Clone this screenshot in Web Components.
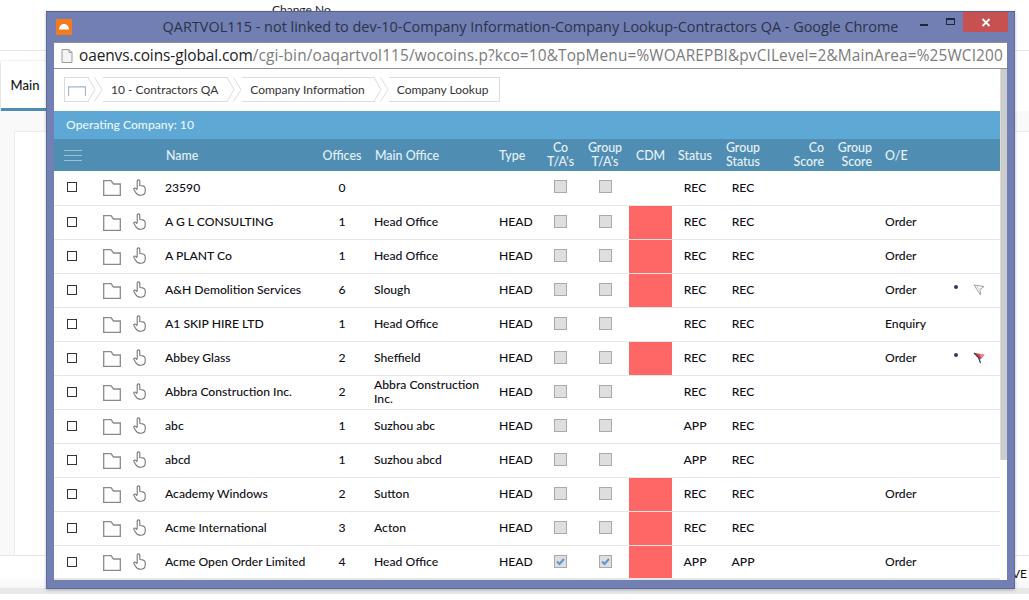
<!DOCTYPE html>
<html lang="en">
<head>
<meta charset="utf-8">
<title>Company Lookup</title>
<style>
  html, body { margin: 0; padding: 0; height: 100%; overflow: hidden; background: #fff; }
  body { font-family: Lato, "Liberation Sans", sans-serif; }
</style>
</head>
<body>
<back-page>
  <popup-window
    heading="QARTVOL115 - not linked to dev-10-Company Information-Company Lookup-Contractors QA - Google Chrome"
    host-part="oaenvs.coins-global.com"
    path-part="/cgi-bin/oaqartvol115/wocoins.p?kco=10&amp;TopMenu=%WOAREPBI&amp;pvCILevel=2&amp;MainArea=%25WCI200">
    <crumb-bar>
      <crumb-item home></crumb-item>
      <crumb-item>10 - Contractors QA</crumb-item>
      <crumb-item>Company Information</crumb-item>
      <crumb-item last>Company Lookup</crumb-item>
    </crumb-bar>
    <lookup-table company="Operating Company: 10"></lookup-table>
  </popup-window>
</back-page>

<script>
// shared column widths for header and rows
const COLUMNS = '36px 43px 32px 155px 44px 135px 41px 41px 48px 43px 46px 50px 58px 48px 71px 20px 35px';

const FOLDER = `<svg width="18" height="16" viewBox="0 0 18 16"><path d="M.7 15.300V.7h7.300l2.500 3.300h6.800v11.300z" fill="none" stroke="#8a8a8a" stroke-width="1.300"/></svg>`;
const HAND = `<svg width="13" height="17" viewBox="0 0 13 17"><path d="M4.200 10V2.200C4.200 .4 6.800 .4 6.800 2.200V6.500C9 6.500 12 7.500 12.200 9.500V12C12.200 15 10 16.300 7.500 16.300 5 16.300 3.500 15 2.500 13.200L1 10.600C.4 9.400 1.800 8.400 2.800 9.400L4.200 10.800" fill="none" stroke="#787878" stroke-width="1.100"/></svg>`;
const FLAG_OFF = `<svg width="12" height="12" viewBox="0 0 12 12"><path d="M1 1l10 1.500-4 3 .5 5.500z" fill="#fff" stroke="#a0a0a0" stroke-width="1"/><path d="M3.500 3l3 2" stroke="#bcbcbc" stroke-width=".9"/></svg>`;
const FLAG_ON = `<svg width="12" height="12" viewBox="0 0 12 12"><path d="M1 .8l10.500 2-4 4.700-1.500-1z" fill="#d8404c"/><path d="M6.500 2l5 .8-3.200 3z" fill="#ea8f92"/><path d="M1 1l4.500 4.500 2 5.500" fill="none" stroke="#36385a" stroke-width="1.200"/></svg>`;

class BackPage extends HTMLElement {
  constructor() {
    super();
    this.attachShadow({ mode: 'open' });
    this.shadowRoot.innerHTML = `
      <style>
        :host { display: flex; flex-direction: column; height: 600px; position: relative; overflow: hidden; color: #222; font: 13px Lato, sans-serif; }
        .top { height: 50px; border-bottom: 1px solid #e6e6e6; padding-left: 272px; line-height: 20px; font-size: 12px; }
        .tabs { height: 50px; margin-top: 10px; padding-left: 1px; box-shadow: 0 1px 2px #e4e4e4; }
        .tab { display: inline-block; width: 42px; padding-left: 3px; height: 47px; border-bottom: 3px solid #4f8db3; text-align: center; line-height: 49px; font-weight: 500; color: #111; box-shadow: 0 1px 3px #bbb; }
        .work { flex: 1; background: #f9f9f9; padding: 20px 0 0 14px; display: flex; }
        .card { flex: 1; background: #fff; border: 1px solid #ececec; border-right: 0; border-bottom: 0; }
        .foot { height: 32px; background: linear-gradient(#fff 60%, #f6f6f6); border-top: 1px solid #e6e6e6; text-align: right; padding-right: 2px; line-height: 36px; font-size: 12px; color: #111; }
        .base { height: 6px; background: #e8e8e8; margin-bottom: 6px; }
      </style>
      <div class="top">Change No</div>
      <div class="tabs"><span class="tab">Main</span></div>
      <div class="work"><div class="card"></div></div>
      <div class="foot">VE</div>
      <div class="base"></div>
      <slot></slot>`;
  }
}

class PopupWindow extends HTMLElement {
  constructor() {
    super();
    this.attachShadow({ mode: 'open' });
  }

  connectedCallback() {
    this.shadowRoot.innerHTML = `
      <style>
        :host { display: flex; flex-direction: column; position: absolute; left: 46px; top: 11px; width: 969px; height: 578px; box-sizing: border-box; background: #717fb2; border: 1px solid #5d6a9c; border-top-color: #565f8e; padding: 0 7px 8px 7px; box-shadow: 0 1px 3px rgba(0,0,0,.25); }
        .title { height: 30px; display: flex; align-items: center; position: relative; }
        .logo { width: 16px; height: 16px; background: #f47a20; margin-left: 2px; flex: none; display: flex; align-items: center; justify-content: center; }
        .text { flex: 1; text-align: center; font: 14.450px "Open Sans", sans-serif; color: #2b3348; white-space: nowrap; padding-right: 18px; margin-top: -2px; }
        .btns { position: absolute; right: -1px; top: 0; display: flex; align-items: flex-start; }
        .min { width: 8px; height: 2px; background: #20263c; margin: 12px 18px 0 0; }
        .max { width: 7px; height: 4px; border: 1.500px solid #20263c; border-top-width: 2.500px; margin: 6px 8px 0 0; }
        .close { width: 45px; height: 20px; background: #c75050; color: #fff; display: flex; align-items: center; justify-content: center; }
        .url { height: 25px; background: #fff; border: 1px solid #8f8f9a; border-width: 1px 0; display: flex; align-items: center; overflow: hidden; white-space: nowrap; font: 15.400px "Open Sans", sans-serif; }
        .url svg { margin: 0 6px 0 7px; flex: none; }
        .url b { font-weight: 400; color: #222; letter-spacing: -.08px; }
        .url span { color: #7c7c7c; letter-spacing: .14px; }
        .body { flex: 1; display: flex; background: #fff; min-height: 0; }
        .main { flex: 1; min-width: 0; }
        .scroll { width: 7px; background: #fff; flex: none; }
        .thumb { height: 391px; background: #cdcdcd; border-left: 1px solid #dcdcdc; border-radius: 0 0 1px 1px; }
      </style>
      <div class="title">
        <div class="logo"><svg width="12" height="8" viewBox="0 0 12 8"><path d="M1 6.500C1 3 3.500 1 6 1s5 2 5 5.500z" fill="#fff"/></svg></div>
        <div class="text"></div>
        <div class="btns">
          <div class="min"></div>
          <div class="max"></div>
          <div class="close"><svg width="10" height="9" viewBox="0 0 10 9"><path d="M1.500 1l7 7M8.500 1l-7 7" stroke="#fff" stroke-width="1.800"/></svg></div>
        </div>
      </div>
      <div class="url">
        <svg width="12" height="14" viewBox="0 0 12 14"><path d="M1 .5h7l3 3v10H1z" fill="#f4f4f4" stroke="#9a9a9a"/><path d="M8 .5v3h3" fill="none" stroke="#9a9a9a"/></svg>
        <b></b><span></span>
      </div>
      <div class="body">
        <div class="main"><slot></slot></div>
        <div class="scroll"><div class="thumb"></div></div>
      </div>`;
    this.shadowRoot.querySelector('.text').textContent = this.getAttribute('heading');
    this.shadowRoot.querySelector('b').textContent = this.getAttribute('host-part');
    this.shadowRoot.querySelector('.url span').textContent = this.getAttribute('path-part');
  }
}

class CrumbBar extends HTMLElement {
  constructor() {
    super();
    this.attachShadow({ mode: 'open' });
    this.shadowRoot.innerHTML = `
      <style>
        :host { display: flex; height: 42px; box-sizing: border-box; padding: 8px 0 0 10px; align-items: flex-start; font: 12px Lato, sans-serif; color: #333; }
      </style>
      <slot></slot>`;
  }
}

class CrumbItem extends HTMLElement {
  constructor() {
    super();
    this.attachShadow({ mode: 'open' });
  }

  connectedCallback() {
    const home = this.hasAttribute('home');
    const last = this.hasAttribute('last');
    const first = home
      ? ''
      : `<svg class="cap" width="9" height="25" viewBox="0 0 9 25"><path d="M0 .5h.5L8 12.500.5 24.500H0" fill="none" stroke="#dcdcdc"/></svg>`;
    const tail = last
      ? ''
      : `<svg class="cap" width="8" height="25" viewBox="0 0 8 25"><path d="M0 .5L7 12.500 0 24.500" fill="#fff" stroke="#dcdcdc"/></svg>`;
    const icon = home
      ? `<svg width="18" height="10" viewBox="0 0 18 10"><path d="M.5 10V.8h17V10" fill="none" stroke="#9fb9d0" stroke-width="1.200"/></svg>`
      : '';
    this.shadowRoot.innerHTML = `
      <style>
        :host { display: flex; height: 25px; margin-right: -1px; }
        .cap { display: block; flex: none; margin-left: -1px; }
        .label { display: flex; align-items: center; height: 25px; box-sizing: border-box; border: 1px solid #dcdcdc; border-width: 1px 0; white-space: nowrap; padding: 0 ${last ? 11 : 10}px 0 8px; }
        :host([home]) .label { border-left-width: 1px; padding: 3px 3px 0 3px; }
        :host([last]) .label { border-right-width: 1px; }
      </style>
      ${first}<div class="label">${icon}<slot></slot></div>${tail}`;
  }
}

class LookupTable extends HTMLElement {
  constructor() {
    super();
    this.attachShadow({ mode: 'open' });
  }

  connectedCallback() {
    const rows = [
      ['23590', '0', '', '', '', 'REC', 'REC', '', false, 0, false],
      ['A G L CONSULTING', '1', 'Head Office', 'HEAD', '', 'REC', 'REC', 'Order', true, 0, false],
      ['A PLANT Co', '1', 'Head Office', 'HEAD', '', 'REC', 'REC', 'Order', true, 0, false],
      ['A&H Demolition Services', '6', 'Slough', 'HEAD', '', 'REC', 'REC', 'Order', true, 1, false],
      ['A1 SKIP HIRE LTD', '1', 'Head Office', 'HEAD', '', 'REC', 'REC', 'Enquiry', false, 0, false],
      ['Abbey Glass', '2', 'Sheffield', 'HEAD', '', 'REC', 'REC', 'Order', true, 2, false],
      ['Abbra Construction Inc.', '2', 'Abbra Construction Inc.', 'HEAD', '', 'REC', 'REC', '', false, 0, false],
      ['abc', '1', 'Suzhou abc', 'HEAD', '', 'APP', 'REC', '', false, 0, false],
      ['abcd', '1', 'Suzhou abcd', 'HEAD', '', 'APP', 'REC', '', false, 0, false],
      ['Academy Windows', '2', 'Sutton', 'HEAD', '', 'REC', 'REC', 'Order', true, 0, false],
      ['Acme International', '3', 'Acton', 'HEAD', '', 'REC', 'REC', '', true, 0, false],
      ['Acme Open Order Limited', '4', 'Head Office', 'HEAD', '', 'APP', 'APP', 'Order', true, 0, true]
    ];
    const esc = s => s.replace(/&/g, '&amp;');
    const box = on => `<span class="ta${on ? ' on' : ''}">${on ? '<svg width="11" height="11" viewBox="0 0 11 11"><path d="M2 5.500l2.500 2.500L9 3" fill="none" stroke="#5b96d2" stroke-width="2"/></svg>' : ''}</span>`;
    const body = rows.map(r => `
      <div class="row">
        <div class="c"><span class="tick"></span></div>
        <div class="folder">${FOLDER}</div>
        <div class="hand">${HAND}</div>
        <div class="l">${esc(r[0])}</div>
        <div class="c">${r[1]}</div>
        <div class="l pad wrap">${r[2]}</div>
        <div class="l">${r[3]}</div>
        <div class="c">${box(r[10])}</div>
        <div class="c">${box(r[10])}</div>
        <div class="${r[8] ? 'cdm' : ''}"></div>
        <div class="c">${r[5]}</div>
        <div class="c">${r[6]}</div>
        <div></div>
        <div></div>
        <div class="l pad11">${r[7]}</div>
        <div class="c">${r[9] ? '<span class="dot"></span>' : ''}</div>
        <div class="flag">${r[9] === 1 ? FLAG_OFF : r[9] === 2 ? FLAG_ON : ''}</div>
      </div>`).join('');

    this.shadowRoot.innerHTML = `
      <style>
        :host { display: block; font: 500 12.150px Lato, sans-serif; color: #0e0e14; }
        .bar { height: 28px; line-height: 28px; background: #5ea8d5; color: #eef6fb; padding-left: 12px; }
        .head, .row { display: grid; grid-template-columns: ${COLUMNS}; }
        .head { height: 32px; background: #4f8db3; color: #e8f1f7; font-size: 12.400px; line-height: 14px; }
        .head > div { display: flex; align-items: center; padding-top: 2px; box-sizing: border-box; }
        .head > .two { padding-top: 0; }
        .head .name { padding-left: 1px; }
        .head .c { justify-content: center; text-align: center; }
        .head .r { justify-content: flex-end; text-align: right; padding-right: 2px; }
        .row { height: 34px; box-sizing: border-box; border-bottom: 1px solid #e6e6e6; }
        .row:first-of-type { height: 35px; }
        .row > div { display: flex; align-items: center; min-width: 0; padding-bottom: 2px; box-sizing: border-box; }
        .row > .cdm { padding: 0; background: #ff6666; }
        .row:last-child { border-bottom: 2px solid #e6e6e6; }
        .row:last-child > div { padding-bottom: 1px; }
        .row:last-child > .cdm { padding: 0; }
        .c { justify-content: center; }
        .row > .pad { padding-left: 10px; }
        .row > .pad11 { padding-left: 11px; }
        .wrap { line-height: 13.500px; }
        .tick { width: 8px; height: 8px; border: 1px solid #333; background: #fff; }
        .row > .folder { padding-left: 13px; padding-top: 2px; }
        .ta { width: 11px; height: 11px; background: #dedede; border: 1px solid #aaa; margin-top: -1px; display: block; }
        .ta svg { display: block; }
        .dot { width: 4px; height: 4px; border-radius: 50%; background: #2f3b63; margin: -5px 0 0 1px; }
        .row > .flag { padding-left: 8px; }
        .lines { margin-left: 10px; display: block; }
      </style>
      <div class="bar">Operating Company: 10</div>
      <div class="head">
        <div class="two" style="grid-column: span 3"><svg class="lines" width="18" height="13" viewBox="0 0 18 13"><path d="M0 1.500h18M0 6.500h18M0 11.500h18" stroke="#9cc0d6" stroke-width="1.200"/></svg></div>
        <div class="name">Name</div>
        <div class="c">Offices</div>
        <div style="padding-left: 11px">Main Office</div>
        <div>Type</div>
        <div class="c two">Co<br>T/A's</div>
        <div class="c two">Group<br>T/A's</div>
        <div class="c">CDM</div>
        <div class="c">Status</div>
        <div class="c two">Group<br>Status</div>
        <div class="r two">Co<br>Score</div>
        <div class="r two">Group<br>Score</div>
        <div style="padding-left: 11px">O/E</div>
        <div></div>
        <div></div>
      </div>
      <div class="rows">${body}</div>`;
  }
}

customElements.define('back-page', BackPage);
customElements.define('popup-window', PopupWindow);
customElements.define('crumb-bar', CrumbBar);
customElements.define('crumb-item', CrumbItem);
customElements.define('lookup-table', LookupTable);
</script>
</body>
</html>
